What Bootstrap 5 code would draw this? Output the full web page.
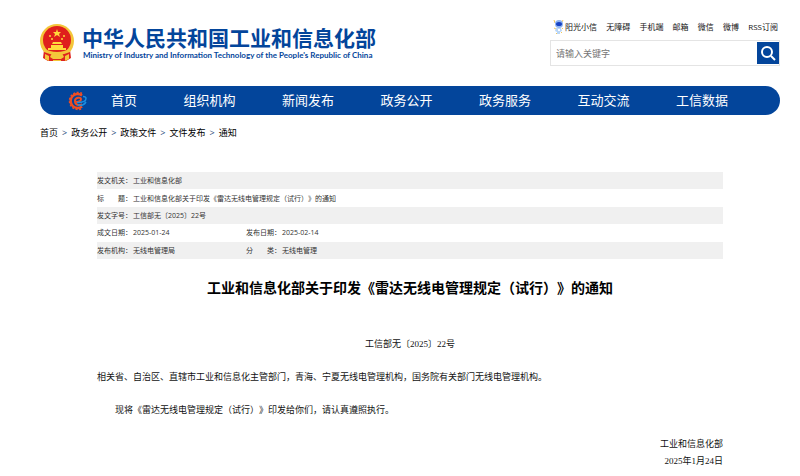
<!DOCTYPE html>
<html lang="zh-CN">
<head>
<meta charset="utf-8">
<meta name="viewport" content="width=device-width, initial-scale=1">
<title>工业和信息化部关于印发《雷达无线电管理规定（试行）》的通知</title>
<link href="https://cdn.jsdelivr.net/npm/bootstrap@5.3.0/dist/css/bootstrap.min.css" rel="stylesheet">
<style>
body { font-family: "Open Sans", "Noto Sans CJK SC", sans-serif; font-size: 9px; line-height: 17px; color: #000; background: #fff; font-kerning: none; text-spacing-trim: space-all; }
a { color: inherit; text-decoration: none; }
.page-wrap { padding: 19px 20px 0 40px; }
.site-head { height: 67px; }
.brand { color: #03459b; gap: 8px; padding-top: 5px; }
.brand-cn { font: 700 21px/26px "Noto Sans CJK SC", sans-serif; }
.brand-en { font: 700 8px/11px Lato, sans-serif; padding-left: 1px; }
.tools { width: 230px; }
.quick { font-size: 8px; line-height: 16px; padding: 0 2px 0 3px; color: #111; }
.search { border: 1px solid #e4e4e4; height: 26px; margin-top: 5px; padding: 1px 0 1px 5px; }
.search input { font-size: 9px; color: #333; outline: 0; min-width: 0; }
.search input::placeholder { color: #757575; }
.search button { width: 22px; height: 22px; background: #03459b; }
.main-nav { height: 29px; border-radius: 15px; background: #03459b; padding: 0 52px 0 28px; gap: 23px; color: #fff; font-size: 13px; }
.crumbs { padding-top: 9px; --bs-breadcrumb-divider: ">"; }
.crumbs .breadcrumb-item + .breadcrumb-item { padding-left: 4px; }
.crumbs .breadcrumb-item + .breadcrumb-item::before { padding-right: 4px; color: #274b7c; }
.doc { padding: 31px 57px 0; }
.meta { height: 87px; table-layout: fixed; font-size: 7px; line-height: 14px; color: #333; }
.meta th, .meta td { padding: 1px 0 0; font-weight: 400; white-space: nowrap; vertical-align: middle; }
.meta tr:nth-child(odd) { background: #f0f0f0; }
.c-label { width: 36px; }
.c-value { width: 113px; }
.doc h1 { font: 700 14px/20px "Noto Sans CJK SC", sans-serif; margin: 18px 0 0; }
.prose { font-family: "Liberation Serif", "Noto Sans CJK SC", serif; font-size: 9px; color: #111; padding-top: 39px; }
.prose p { margin: 0 0 16px; }
.prose .indent { text-indent: 2em; margin-bottom: 17px; }
</style>
<script src="https://cdn.jsdelivr.net/npm/bootstrap@5.3.0/dist/js/bootstrap.bundle.min.js"></script>
</head>
<body>
<div class="page-wrap">
  <header class="site-head d-flex justify-content-between align-items-start">
    <a href="#" class="brand d-flex">
      <svg width="34" height="38" viewBox="0 0 34 38" aria-hidden="true">
        <circle cx="17" cy="17" r="17" fill="#f4c63a"/>
        <path d="M4 26h26l1 8-5 3H8l-5-3z" fill="#df241f"/>
        <circle cx="17" cy="16" r="14" fill="#df1f1c"/>
        <path d="M17 5l1 3h3l-2 2 1 3-3-2-3 2 1-3-2-2h3z" fill="#ffd93b"/>
        <g fill="#ffd93b"><circle cx="10" cy="12" r="1"/><circle cx="12" cy="15" r="1"/><circle cx="22" cy="15" r="1"/><circle cx="24" cy="12" r="1"/>
        <path d="M12 20l1-2h8l1 2zM11 21h12v3H11zM8 24h18v2H8z"/></g>
        <path d="M3 24q14 8 28 0l-1 4q-13 6-26 0z" fill="#f4c63a"/>
        <path d="M12 29h10l2 4-3 2h-8l-3-2z" fill="#f4c63a"/>
        <path d="M5 30l4 2v5l-4-2zM29 30l-4 2v5l4-2zM13 36h8v1h-8z" fill="#f4c63a"/>
      </svg>
      <span class="d-flex flex-column">
        <span class="brand-cn text-nowrap">中华人民共和国工业和信息化部</span>
        <span class="brand-en text-nowrap">Ministry of Industry and Information Technology of the People's Republic of China</span>
      </span>
    </a>
    <div class="tools">
      <nav class="quick d-flex justify-content-between text-nowrap" aria-label="快捷链接">
        <a href="#" class="d-flex align-items-center">
          <svg width="12" height="16" viewBox="0 0 12 16" aria-hidden="true">
            <path d="M2 4L1 1M9 3l1-2M1 9l2 1M10 9l-1 1M3 14l1 1M8 14l1-1" stroke="#f3c95a" fill="none"/>
            <ellipse cx="6" cy="5" rx="4" ry="4" fill="#8fb4ef"/><ellipse cx="6" cy="5" rx="3" ry="2" fill="#1743c4"/>
            <path d="M3 9h5l1 3-2 1v2H4v-2l-2-1z" fill="#b9d6f7"/><path d="M5 10h2v2H5z" fill="#fff"/>
          </svg>阳光小信</a>
        <a href="#">无障碍</a><a href="#">手机端</a><a href="#">邮箱</a><a href="#">微信</a><a href="#">微博</a><a href="#">RSS订阅</a>
      </nav>
      <form class="search d-flex align-items-center" role="search">
        <input type="text" class="border-0 p-0 flex-grow-1 bg-transparent" placeholder="请输入关键字" aria-label="请输入关键字">
        <button type="button" class="border-0 p-0 d-flex align-items-center justify-content-center flex-shrink-0" aria-label="搜索">
          <svg width="16" height="16" viewBox="0 0 16 16" fill="none" stroke="#fff" stroke-width="2" aria-hidden="true"><circle cx="7" cy="7" r="5"/><path d="M11 11l4 4"/></svg>
        </button>
      </form>
    </div>
  </header>

  <nav class="main-nav d-flex align-items-center" aria-label="主导航">
    <svg class="flex-shrink-0" width="20" height="20" viewBox="0 0 20 20" fill="none" aria-hidden="true">
      <path d="M14 4.500A7 7 0 1 0 14 15.500" stroke="#f04e23" stroke-width="2.500"/>
      <path d="M14 2.500A8.500 8.500 0 1 0 14 17.500" stroke="#f04e23" stroke-width="1.500" stroke-dasharray="2 1.500"/>
      <path d="M7 11c3 0 6-1 6-3s-6-2-6 2 4 5 7 3" stroke="#f04e23" stroke-width="2"/>
      <path d="M9 11.500c5 0 9-1.500 9-4 0-1.500-1-2-3-2M10 14c3 1 6 0 8-3" stroke="#1b8ee0" stroke-width="1.500"/>
    </svg>
    <ul class="list-unstyled d-flex justify-content-between flex-grow-1 mb-0 text-nowrap">
      <li><a href="#">首页</a></li><li><a href="#">组织机构</a></li><li><a href="#">新闻发布</a></li><li><a href="#">政务公开</a></li><li><a href="#">政务服务</a></li><li><a href="#">互动交流</a></li><li><a href="#">工信数据</a></li>
    </ul>
  </nav>

  <nav class="crumbs" aria-label="当前位置">
    <ol class="breadcrumb mb-0">
      <li class="breadcrumb-item"><a href="#">首页</a></li>
      <li class="breadcrumb-item"><a href="#">政务公开</a></li>
      <li class="breadcrumb-item"><a href="#">政策文件</a></li>
      <li class="breadcrumb-item"><a href="#">文件发布</a></li>
      <li class="breadcrumb-item"><a href="#">通知</a></li>
    </ol>
  </nav>

  <main class="doc">
    <table class="meta w-100">
      <colgroup><col class="c-label"><col class="c-value"><col class="c-label"><col></colgroup>
      <tbody>
        <tr><th scope="row">发文机关：</th><td colspan="3">工业和信息化部</td></tr>
        <tr><th scope="row">标　　题：</th><td colspan="3">工业和信息化部关于印发《雷达无线电管理规定（试行）》的通知</td></tr>
        <tr><th scope="row">发文字号：</th><td colspan="3">工信部无〔2025〕22号</td></tr>
        <tr><th scope="row">成文日期：</th><td>2025-01-24</td><th scope="row">发布日期：</th><td>2025-02-14</td></tr>
        <tr><th scope="row">发布机构：</th><td>无线电管理局</td><th scope="row">分　　类：</th><td>无线电管理</td></tr>
      </tbody>
    </table>
    <h1 class="text-center">工业和信息化部关于印发《雷达无线电管理规定（试行）》的通知</h1>
    <div class="prose">
      <p class="text-center">工信部无〔2025〕22号</p>
      <p>相关省、自治区、直辖市工业和信息化主管部门，青海、宁夏无线电管理机构，国务院有关部门无线电管理机构。</p>
      <p class="indent">现将《雷达无线电管理规定（试行）》印发给你们，请认真遵照执行。</p>
      <div class="text-end">工业和信息化部<br>2025年1月24日</div>
    </div>
  </main>
</div>
</body>
</html>
